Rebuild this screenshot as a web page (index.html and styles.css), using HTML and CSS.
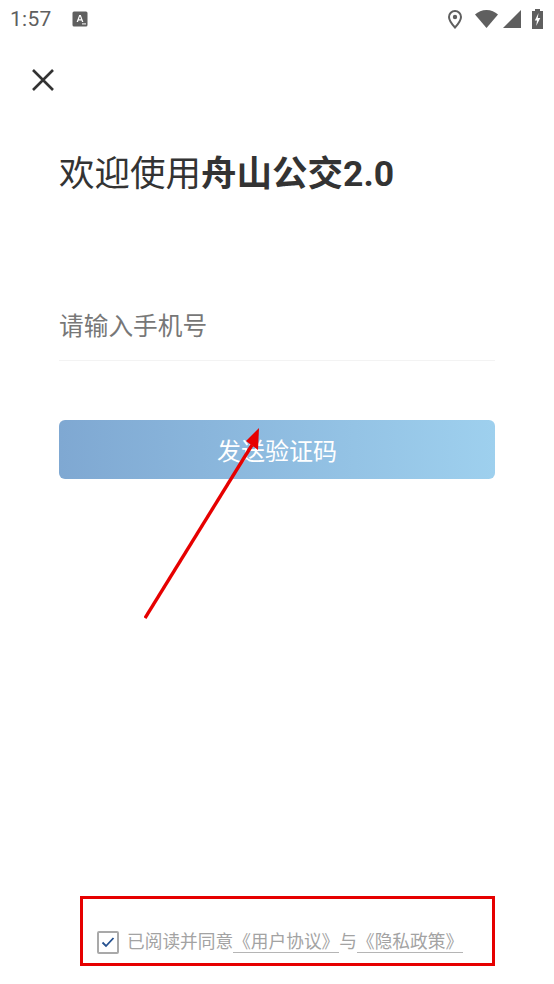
FILE: index.html
```html
<!DOCTYPE html>
<html lang="zh-CN">
<head>
  <meta charset="UTF-8">
  <meta name="viewport" content="width=device-width, initial-scale=1">
  <title>舟山公交</title>
  <link rel="stylesheet" href="styles.css">
</head>
<body>
  <div class="page">
    <div class="status-bar">
      <span class="time">1:57</span>
      <svg class="status-a" width="16" height="16" viewBox="0 0 16 16">
        <rect x="0.5" y="0.5" width="15" height="15" rx="1.5" fill="#5f5f5f"/>
        <path d="M4.6 11 7.2 4h1.6l2.6 7H10l-.5-1.5h-3L6 11zM6.9 8.3h2.2L8 5.3z" fill="#fff"/>
        <rect x="10" y="12.4" width="4" height="1" fill="#fff"/>
      </svg>
      <div class="status-icons">
        <svg width="14" height="19" viewBox="0 0 14 19">
          <path d="M7 1a6 6 0 0 0-6 6c0 4 6 10.500 6 10.500S13 11 13 7a6 6 0 0 0-6-6z" fill="none" stroke="#5f5f5f" stroke-width="2"/>
          <circle cx="7" cy="7" r="2.200" fill="#5f5f5f"/>
        </svg>
        <svg class="wifi" width="23" height="18" viewBox="0 0 23 18">
          <path d="M0 4.500C3 1.800 7 0 11.500 0S20 1.800 23 4.500L11.500 18z" fill="#5f5f5f"/>
        </svg>
        <svg class="signal" width="18" height="18" viewBox="0 0 18 18">
          <path d="M0 18 18 0v18z" fill="#5f5f5f"/>
        </svg>
        <svg class="battery" width="11" height="20" viewBox="0 0 11 20">
          <path d="M3 0h5v2h3v18H0V2h3z" fill="#5f5f5f"/>
          <path d="M6.500 4 2.800 11.500H5L4.200 17 8.300 9H5.800z" fill="#fff"/>
        </svg>
      </div>
    </div>

    <button class="close-btn" aria-label="关闭">
      <svg width="24" height="24" viewBox="0 0 24 24">
        <path d="M2 2 22 22M22 2 2 22" stroke="#333" stroke-width="2.600" fill="none"/>
      </svg>
    </button>

    <h1 class="title">欢迎使用<b>舟山公交2.0</b></h1>

    <div class="phone-field">请输入手机号</div>

    <button class="send-btn">发送验证码</button>

    <div class="agreement">
      <span class="check">
        <svg width="14" height="12" viewBox="0 0 14 12">
          <path d="M1.500 6.500 5 10 12.500 2" stroke="#24508f" stroke-width="1.800" fill="none"/>
        </svg>
      </span>
      <span class="agree-text">已阅读并同意<a class="link">《用户协议》</a>与<a class="link">《隐私政策》</a></span>
    </div>

    <!-- 标注 -->
    <svg class="arrow" width="130" height="200" viewBox="0 0 130 200">
      <path d="M1 198 108 25" stroke="#e60000" stroke-width="3.400" fill="none"/>
      <path d="M115 8 114 30 102 21z" fill="#e60000"/>
    </svg>
    <div class="red-box"></div>
  </div>
</body>
</html>
```

FILE: styles.css
```css
* {
  box-sizing: border-box;
}

body {
  margin: 0;
  background: #fff;
  font-family: "Roboto", "Noto Sans CJK SC", sans-serif;
}

.page {
  position: relative;
  display: flex;
  flex-direction: column;
  width: 554px;
  height: 984px;
  overflow: hidden;
  padding: 0 59px;
  background: #fff;
}

.status-bar {
  display: flex;
  align-items: center;
  height: 38px;
  margin: 0 -59px;
  padding: 0 0 0 10px;
}

.time {
  font-size: 21px;
  color: #5f5f5f;
  letter-spacing: 0.3px;
}

.status-a {
  margin-left: 20px;
}

.status-icons {
  display: flex;
  align-items: center;
  margin-left: auto;
  padding-right: 11px;
}

.wifi {
  margin-left: 13px;
}

.signal {
  margin-left: 5px;
}

.battery {
  margin-left: 11px;
}

.close-btn {
  display: block;
  align-self: flex-start;
  width: 24px;
  height: 24px;
  margin: 30px 0 0 -28px;
  padding: 0;
  border: none;
  background: none;
}

.close-btn svg {
  display: block;
}

.title {
  margin: 56px 0 0;
  font-size: 35.500px;
  line-height: 52px;
  font-weight: 400;
  color: #333;
  white-space: nowrap;
}

.title b {
  font-weight: 700;
}

.phone-field {
  height: 66px;
  margin-top: 95px;
  padding-top: 14px;
  font-size: 24.700px;
  line-height: 36px;
  color: #777;
  border-bottom: 1px solid #f3f3f3;
}

.send-btn {
  width: 436px;
  height: 59px;
  margin-top: 59px;
  padding: 0;
  border: none;
  border-radius: 6px;
  background: linear-gradient(to right, #7fa8d2, #9ed0ee);
  color: #fff;
  font-family: inherit;
  font-size: 24px;
}

.agreement {
  display: flex;
  align-items: center;
  margin: auto -30px 29px 38px;
}

.check {
  display: flex;
  align-items: center;
  justify-content: center;
  width: 22px;
  height: 23px;
  border: 2px solid #a9a9a9;
  border-radius: 2px;
}

.agree-text {
  margin-left: 8px;
  font-size: 17.700px;
  line-height: 26px;
  color: #a3a3a3;
  white-space: nowrap;
}

.link {
  display: inline-block;
  line-height: 20px;
  border-bottom: 1px solid #b5b5b5;
}

.arrow {
  position: absolute;
  left: 144px;
  top: 420px;
}

.red-box {
  position: absolute;
  left: 80px;
  top: 896px;
  width: 415px;
  height: 70px;
  border: 3px solid #e60000;
}
```
